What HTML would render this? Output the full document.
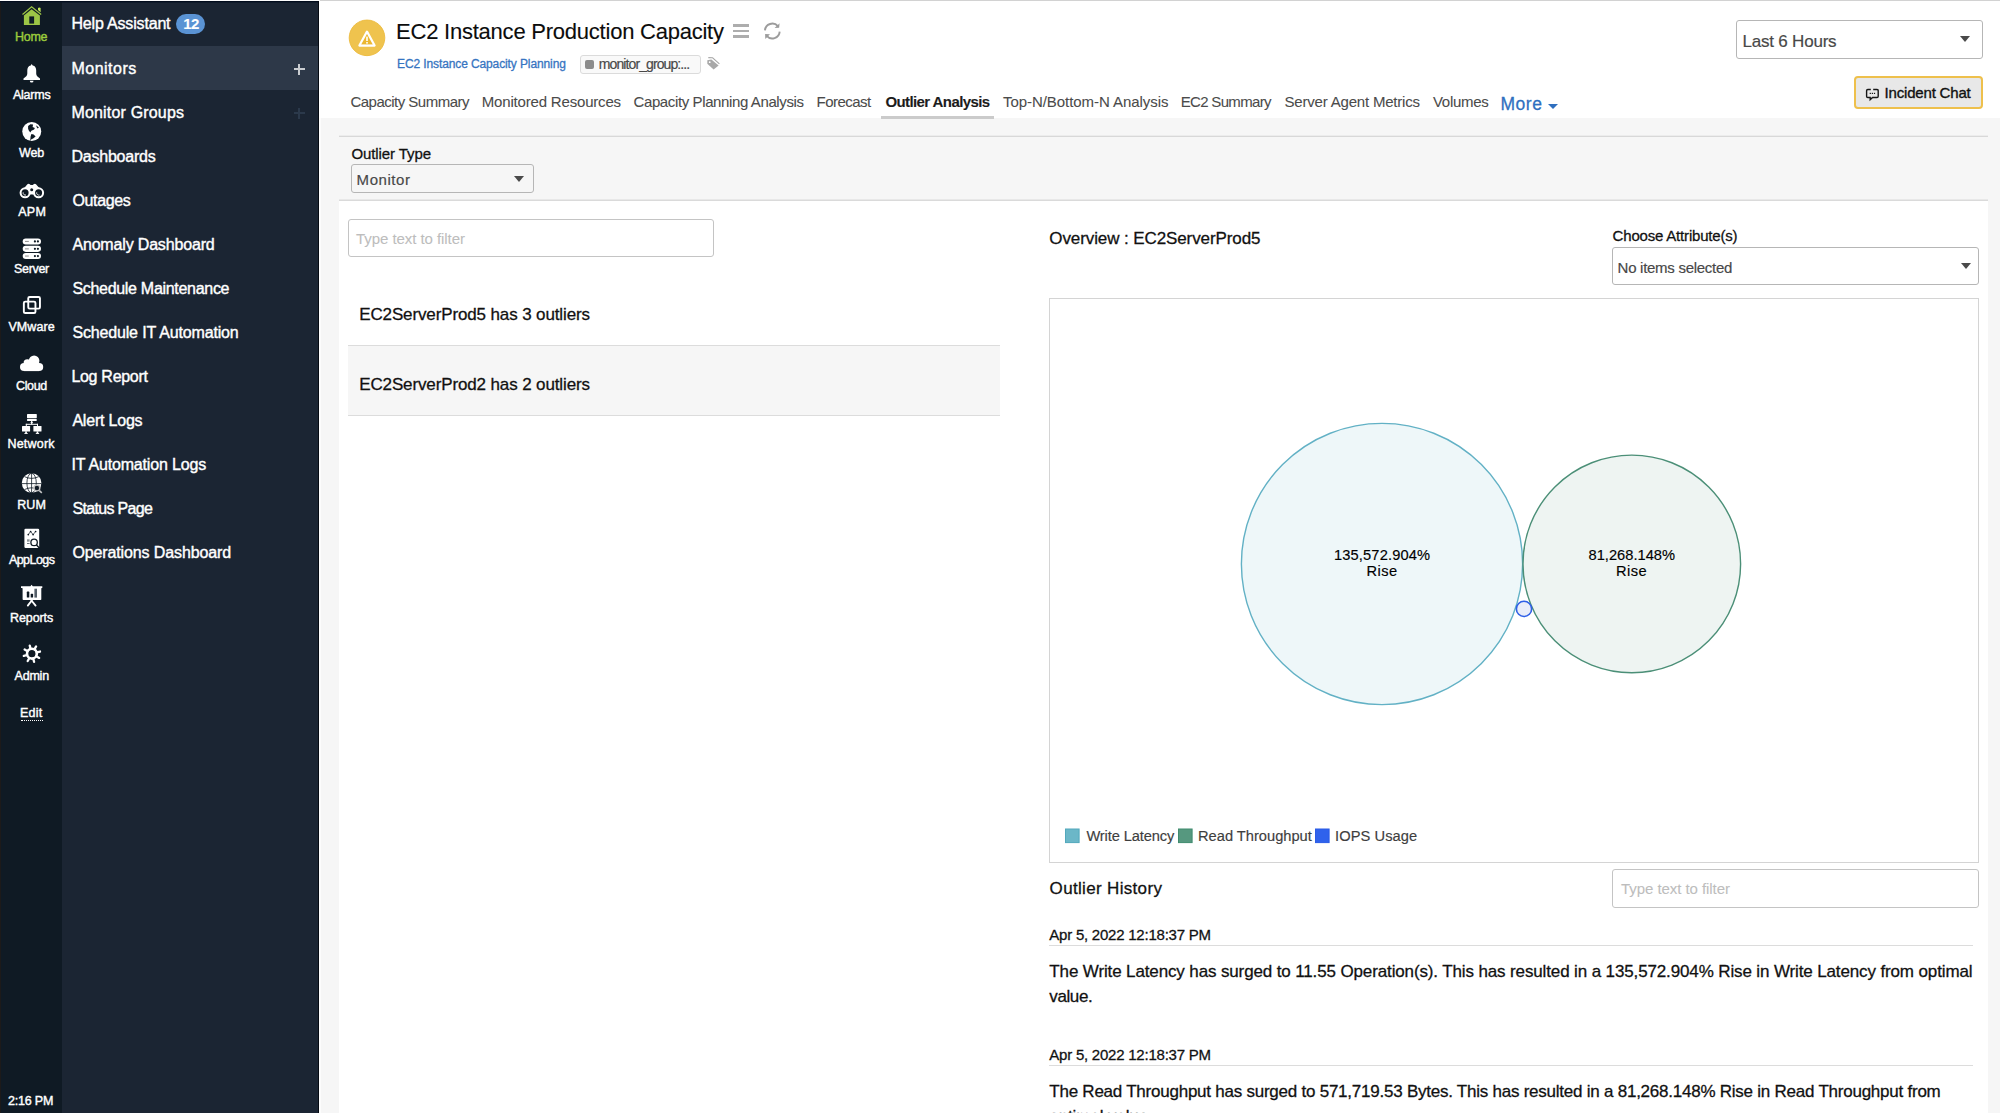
<!DOCTYPE html>
<html>
<head>
<meta charset="utf-8">
<title>EC2 Instance Production Capacity</title>
<style>
*{box-sizing:border-box;margin:0;padding:0}
html,body{width:2000px;height:1113px;overflow:hidden;background:#f6f6f6;font-family:"Liberation Sans",sans-serif;color:#111}
.t{position:absolute;white-space:pre;line-height:1}
.a{position:absolute}
.hr{position:absolute;height:1px;background:#dcdcdc}
.box{position:absolute;border:1px solid #c2c2c2;border-radius:3px;background:#fff}
.caret{position:absolute;width:0;height:0;border-left:5.5px solid transparent;border-right:5.5px solid transparent;border-top:6.5px solid #4a4a4a}
svg{position:absolute;overflow:visible}

</style>
</head>
<body>
<div class="a" style="left:0;top:0;width:62px;height:1113px;background:#0f1a24"></div>
<div class="a" style="left:0;top:0;width:1px;height:1113px;background:#1c1a1a"></div>
<div class="a" style="left:62px;top:0;width:257px;height:1113px;background:#1b2533"></div>
<div class="a" style="left:62px;top:46px;width:257px;height:44px;background:#2d3848"></div>
<div class="a" style="left:319px;top:0;width:1681px;height:118px;background:#fff"></div>
<div class="a" style="left:320px;top:0;width:1680px;height:1px;background:#d2d2d2"></div>
<div class="a" style="left:0;top:0;width:320px;height:1px;background:#fdfdfd"></div>
<div class="a" style="left:0;top:1px;width:319px;height:1px;background:#020c1c"></div>
<div class="a" style="left:0;top:2px;width:319px;height:1px;background:#0a1626;opacity:.6"></div>
<div class="a" style="left:318px;top:1px;width:1px;height:1112px;background:#050a12"></div>
<div class="a" style="left:339px;top:200px;width:1649px;height:913px;background:#fff"></div>
<div class="a" style="left:319px;top:118px;width:2px;height:995px;background:#fcfcfc"></div>
<div class="hr" style="left:339px;top:135px;width:1649px;background:#ececec"></div>
<div class="hr" style="left:339px;top:136px;width:1649px;background:#d8d8d8"></div>
<div class="hr" style="left:339px;top:199px;width:1649px;background:#e8e8e8"></div>
<div class="hr" style="left:339px;top:200px;width:1649px;background:#dadada"></div>
<!-- menu badge + plus -->
<div class="a" style="left:176.4px;top:13.5px;width:28.8px;height:20.3px;border-radius:10.2px;background:#5a93d4"></div>
<div class="a" style="left:293.5px;top:68.3px;width:11px;height:1.5px;background:#c9ccd0"></div>
<div class="a" style="left:298.2px;top:63.5px;width:1.5px;height:11px;background:#c9ccd0"></div>
<div class="a" style="left:293.5px;top:112.3px;width:11px;height:1.5px;background:#2b394b"></div>
<div class="a" style="left:298.2px;top:107.5px;width:1.5px;height:11px;background:#2b394b"></div>
<div class="a" style="left:21px;top:720px;width:22px;height:0;border-top:1px dotted #fff"></div>
<!--ICONS_START-->
<svg style="left:0;top:0" width="62" height="700" viewBox="0 0 62 700">
<path d="M22.5 14.5 L31.6 6.8 L41.2 14.5" fill="none" stroke="#9cc646" stroke-width="1.25" stroke-linejoin="miter"/>
<path d="M31.6 9.3 L39.9 15.6 V25 H23.9 V15.6 Z" fill="#9cc646"/>
<path d="M38 10.1 V7.9 Q39.3 7.2 40.6 7.9 V12.2 Z" fill="#bfe656"/>
<rect x="29.3" y="16.4" width="4.8" height="7.2" fill="#0f1a24"/>
<rect x="30.4" y="17.7" width="2.6" height="5" fill="#0f2028"/>
<path d="M31.7 64.1 L32.7 65.5 C35.2 65.9 36.2 68 36.2 70.5 L36.2 73.5 C36.2 75.6 37.6 77 40 78.4 L40 79.9 L23.5 79.9 L23.5 78.4 C25.9 77 27.3 75.6 27.3 73.5 L27.3 70.5 C27.3 68 28.3 65.9 30.7 65.5 Z" fill="#fff"/>
<path d="M29.8 80.7 H33.5 A1.85 1.85 0 0 1 29.8 80.7 Z" fill="#fff"/>
<circle cx="31.75" cy="131.5" r="9.5" fill="#fff"/>
<path d="M28.1 126.1 L30.4 124.3 L33.1 124.5 L32.6 127.1 L34.9 128.1 L34.1 129.6 L31.4 130.8 L30.3 132.6 L28.8 130.6 L28.1 128.8 Z" fill="#0f1a24"/>
<path d="M36.1 125.3 L38.9 127.6 L37.6 128.6 L36.6 127.1 Z" fill="#0f1a24"/>
<path d="M31.4 134.1 L33.6 134.4 L35.6 136.4 L33.1 138.4 L31.4 139.3 L30.2 140.9 L30.6 136.6 Z" fill="#0f1a24"/>
<path d="M22.6 190 L27.4 184.2 Q28.6 183.5 29.8 184.2 L30.6 185 H32.8 L33.6 184.2 Q34.9 183.5 36 184.2 L41 190 L39 194.6 H24.6 Z" fill="#fff"/>
<circle cx="25.1" cy="192.8" r="5.5" fill="#fff"/><circle cx="38.6" cy="192.8" r="5.5" fill="#fff"/>
<circle cx="25.1" cy="192.8" r="3.5" fill="#0f1a24"/><circle cx="38.6" cy="192.8" r="3.5" fill="#0f1a24"/>
<path d="M23.2 192.4 A2.2 2.2 0 0 0 26 195" fill="none" stroke="#fff" stroke-width="0.9"/><path d="M36.7 192.4 A2.2 2.2 0 0 0 39.5 195" fill="none" stroke="#fff" stroke-width="0.9"/>
<circle cx="31.7" cy="189.7" r="1.5" fill="#0f1a24"/>
<path d="M30.2 198 L31.7 194.4 L33.2 198 Z" fill="#0f1a24"/>
<rect x="22.7" y="238.4" width="18.3" height="6.1" rx="3.05" fill="#fff"/>
<rect x="25" y="240.90" width="3.8" height="1.1" fill="#9a9a9a"/>
<circle cx="34.9" cy="241.45" r="1.1" fill="#0f1a24"/><circle cx="37.9" cy="241.45" r="1.1" fill="#0f1a24"/>
<rect x="22.7" y="245.8" width="18.3" height="6.1" rx="3.05" fill="#fff"/>
<rect x="25" y="248.30" width="3.8" height="1.1" fill="#9a9a9a"/>
<circle cx="34.9" cy="248.85" r="1.1" fill="#0f1a24"/><circle cx="37.9" cy="248.85" r="1.1" fill="#0f1a24"/>
<rect x="22.7" y="253.0" width="18.3" height="6.1" rx="3.05" fill="#fff"/>
<rect x="25" y="255.50" width="3.8" height="1.1" fill="#9a9a9a"/>
<circle cx="34.9" cy="256.05" r="1.1" fill="#0f1a24"/><circle cx="37.9" cy="256.05" r="1.1" fill="#0f1a24"/>
<rect x="28.25" y="296.95" width="11.7" height="11.7" rx="1.4" fill="none" stroke="#fff" stroke-width="1.9"/>
<rect x="23.85" y="301.65" width="11.6" height="11.4" rx="1.4" fill="none" stroke="#fff" stroke-width="1.9"/>
<circle cx="34.1" cy="360.8" r="5.3" fill="#fff"/><circle cx="27.3" cy="363" r="3.7" fill="#fff"/><circle cx="24.1" cy="367" r="4.1" fill="#fff"/><circle cx="39.1" cy="367" r="4.1" fill="#fff"/><rect x="24.1" y="362.5" width="15" height="8.6" fill="#fff"/>
<rect x="27" y="414" width="9.8" height="4.2" rx="0.6" fill="#fff"/><rect x="27" y="418.9" width="9.8" height="2" rx="0.6" fill="#fff"/>
<rect x="31.1" y="420.8" width="1.2" height="3.6" fill="#fff"/><path d="M30.2 422.4 L31.7 421.6 L33.2 422.4 L31.7 423.2 Z" fill="#fff"/>
<rect x="25.8" y="423.8" width="12.2" height="1" fill="#fff"/><rect x="25.8" y="423.8" width="1" height="2.4" fill="#fff"/><rect x="37" y="423.8" width="1" height="2.4" fill="#fff"/>
<rect x="22" y="426.1" width="8.1" height="5.4" rx="0.5" fill="#fff"/><rect x="25.2" y="431.4" width="1.7" height="2" fill="#fff"/><rect x="24.4" y="433.1" width="3.3" height="0.9" fill="#fff"/>
<rect x="33.4" y="426.1" width="8.1" height="5.4" rx="0.5" fill="#fff"/><rect x="36.6" y="431.4" width="1.7" height="2" fill="#fff"/><rect x="35.8" y="433.1" width="3.3" height="0.9" fill="#fff"/>
<circle cx="31.6" cy="483.05" r="9.8" fill="#fff"/>
<g fill="none" stroke="#0f1a24" stroke-width="0.8"><path d="M31.6 473 V493"/><path d="M21.8 483.6 H41.4"/><ellipse cx="31.6" cy="483.05" rx="4.7" ry="9.8"/><path d="M24.4 476.6 Q31.6 480.2 38.8 476.6"/><path d="M24.4 489.6 Q31.6 486 38.8 489.6"/></g>
<circle cx="36.9" cy="488" r="2.9" fill="#0f1a24" stroke="#c4c4c4" stroke-width="1.4"/><path d="M39.4 490.6 L41.8 492.9" stroke="#c8c8c8" stroke-width="1.5"/>
<rect x="24.4" y="528.7" width="14.8" height="19.2" rx="1.2" fill="#fff"/>
<path d="M28.3 534.6 L30.6 531.5 L33.1 534.6 L35.6 531.5" fill="none" stroke="#0f1a24" stroke-width="0.7"/>
<circle cx="28.3" cy="534.6" r="0.85" fill="#0f1a24"/>
<circle cx="30.6" cy="531.5" r="0.85" fill="#0f1a24"/>
<circle cx="33.1" cy="534.6" r="0.85" fill="#0f1a24"/>
<circle cx="35.6" cy="531.5" r="0.85" fill="#0f1a24"/>
<rect x="27" y="539.3" width="2.6" height="2.4" fill="#8d9499"/><rect x="27" y="543" width="2.6" height="0.9" fill="#5a646c"/>
<circle cx="34.1" cy="542.4" r="3.2" fill="#fff" stroke="#0f1a24" stroke-width="1.3"/><path d="M36.5 544.9 L39.4 547.9" stroke="#0f1a24" stroke-width="1.4"/>
<path d="M21 586.3 H30.4 L31.6 584.8 L32.8 586.3 H42.3 V588 H21 Z" fill="#fff"/><rect x="22.6" y="587.5" width="18.7" height="12.5" rx="0.8" fill="#fff"/>
<rect x="26.8" y="591.6" width="2.5" height="6" rx="0.6" fill="#0f1a24"/><rect x="30.7" y="593.8" width="2.4" height="3.8" rx="0.6" fill="#0f1a24"/><rect x="34.4" y="588.7" width="2.6" height="8.9" fill="#56606a"/>
<path d="M27.8 605.6 L31.6 600.6 L35.6 605.6" fill="none" stroke="#fff" stroke-width="1.8" stroke-linecap="round"/><rect x="30.6" y="599.5" width="2" height="2" fill="#fff"/>
<path d="M30.61 648.87 L29.73 645.59" stroke="#fff" stroke-width="2.3" stroke-linecap="round"/>
<path d="M34.40 649.37 L36.10 646.43" stroke="#fff" stroke-width="2.3" stroke-linecap="round"/>
<path d="M36.73 652.41 L40.01 651.53" stroke="#fff" stroke-width="2.3" stroke-linecap="round"/>
<path d="M36.23 656.20 L39.17 657.90" stroke="#fff" stroke-width="2.3" stroke-linecap="round"/>
<path d="M33.19 658.53 L34.07 661.81" stroke="#fff" stroke-width="2.3" stroke-linecap="round"/>
<path d="M29.40 658.03 L27.70 660.97" stroke="#fff" stroke-width="2.3" stroke-linecap="round"/>
<path d="M27.07 654.99 L23.79 655.87" stroke="#fff" stroke-width="2.3" stroke-linecap="round"/>
<path d="M27.57 651.20 L24.63 649.50" stroke="#fff" stroke-width="2.3" stroke-linecap="round"/>
<circle cx="31.9" cy="653.7" r="4.9" fill="none" stroke="#fff" stroke-width="2.6"/>
</svg>
<!--ICONS_END-->
<!-- header -->
<svg style="left:346px;top:17px" width="42" height="42" viewBox="346 17 42 42"><circle cx="367" cy="37.85" r="17.8" fill="#efc34e" stroke="#ecba3c" stroke-width="0.9"/><path d="M367 34.6 L372.4 44.1 H361.6 Z" fill="#ecb730"/></svg>
<svg style="left:357px;top:29px" width="20" height="19" viewBox="0 0 20 19"><path d="M10 2.6 L17.6 16.6 H2.4 Z" fill="none" stroke="#fff" stroke-width="2.2" stroke-linejoin="round"/><rect x="9.2" y="7.6" width="1.6" height="4.4" fill="#fff"/><rect x="9.2" y="13" width="1.6" height="1.6" fill="#fff"/></svg>
<div class="a" style="left:733px;top:24px;width:16px;height:3px;background:#adadad"></div>
<div class="a" style="left:733px;top:29.6px;width:16px;height:2.8px;background:#adadad"></div>
<div class="a" style="left:733px;top:35px;width:16px;height:3px;background:#adadad"></div>
<svg style="left:760px;top:20px" width="24" height="22" viewBox="760 20 24 22"><path d="M764.93 30.4 A7.4 7.4 0 0 1 777.9 26.2" fill="none" stroke="#9c9c9c" stroke-width="1.9"/><path d="M779.68 31.6 A7.4 7.4 0 0 1 766.7 35.9" fill="none" stroke="#9c9c9c" stroke-width="1.9"/><path d="M779.6 23.2 L779.1 27.8 L774.6 28 Z" fill="#9c9c9c"/><path d="M765.1 34.1 L770 34.3 L765.3 39.1 Z" fill="#9c9c9c"/></svg>
<div class="box" style="left:580px;top:54.5px;width:121px;height:19px;background:#f9f9f9;border-color:#dbdbdb"></div>
<div class="a" style="left:585px;top:59.6px;width:9px;height:9px;border-radius:2px;background:#8c8c8c"></div>
<svg style="left:705px;top:55px" width="16" height="16" viewBox="705 55 16 16"><path d="M707.3 60.2 L711.4 59.5 L718.6 65.6 L713.6 69.6 L707.3 63.8 Z" fill="#a8a8a8"/><path d="M708.3 57.6 L712.6 57.8 L719.4 63.9" fill="none" stroke="#a8a8a8" stroke-width="1.1"/><circle cx="709.7" cy="62.2" r="0.9" fill="#fff"/></svg>
<div class="a" style="left:881.2px;top:115.5px;width:112.6px;height:3px;background:#cbcbcb"></div>
<div class="a" style="left:1547.6px;top:103.6px;width:0;height:0;border-left:5.5px solid transparent;border-right:5.5px solid transparent;border-top:5.5px solid #2f6fbf"></div>
<div class="box" style="left:1736px;top:19.5px;width:247px;height:39px;border-color:#b6b6b6"></div>
<div class="caret" style="left:1959.5px;top:36.3px"></div>
<div class="a" style="left:1854px;top:76px;width:129px;height:33px;border:2px solid #eec04c;border-radius:4px;background:#e8e8e8"></div>
<svg style="left:1865px;top:88px" width="15" height="13" viewBox="0 0 15 13"><path d="M5.8 1.5 H2.8 Q1.6 1.5 1.6 2.7 V8.3 Q1.6 9.5 2.8 9.5 H5.2 V11.6 L7.6 9.5 H12 Q13.2 9.5 13.2 8.3 V2.7 Q13.2 1.5 12 1.5 H8.2" fill="none" stroke="#161616" stroke-width="1.4"/><rect x="4.7" y="4.8" width="1.2" height="1.2" fill="#161616"/><rect x="6.8" y="4.8" width="1.2" height="1.2" fill="#161616"/><rect x="8.9" y="4.8" width="1.2" height="1.2" fill="#161616"/></svg>
<!-- filter strip -->
<div class="box" style="left:351.4px;top:164.4px;width:182.6px;height:28.4px;background:#f6f6f6;border-color:#b6b6b6"></div>
<div class="caret" style="left:514.4px;top:176px"></div>
<div class="box" style="left:347.6px;top:219px;width:366.6px;height:38.4px;border-color:#c4c4c4"></div>
<!-- list -->
<div class="a" style="left:347.5px;top:346px;width:652.5px;height:69px;background:#f6f6f6"></div>
<div class="hr" style="left:347.5px;top:345px;width:652.5px"></div>
<div class="hr" style="left:347.5px;top:414.5px;width:652.5px"></div>
<!-- right -->
<div class="box" style="left:1612.4px;top:246.6px;width:366.6px;height:38.4px;border-color:#b6b6b6"></div>
<div class="caret" style="left:1960.5px;top:263px"></div>
<div class="a" style="left:1049px;top:298px;width:930px;height:564.5px;border:1px solid #d4d4d4;background:#fff"></div>
<svg style="left:1049px;top:298px" width="930" height="564" viewBox="1049 298 930 564">
<circle cx="1382" cy="564" r="140.6" fill="#eef7f9" stroke="#62b1c5" stroke-width="1.4"/>
<circle cx="1631.8" cy="563.9" r="108.8" fill="#eef4f2" stroke="#4b8f77" stroke-width="1.4"/>
<circle cx="1524" cy="608.9" r="7.6" fill="#e9edf9" stroke="#2f5fe6" stroke-width="1.6"/>
<rect x="1065.5" y="829" width="13.6" height="13.6" fill="#6bb7c8" stroke="#52a8bc" stroke-width="1"/>
<rect x="1178.5" y="829" width="13.6" height="13.6" fill="#56987f" stroke="#3f8b6e" stroke-width="1"/>
<rect x="1315.5" y="829" width="13.6" height="13.6" fill="#2f62ec" stroke="#2a5be6" stroke-width="1"/>
</svg>
<div class="box" style="left:1612.4px;top:869.4px;width:366.6px;height:38.4px;border-color:#c4c4c4"></div>
<div class="hr" style="left:1049px;top:945px;width:924px"></div>
<div class="hr" style="left:1049px;top:1065px;width:924px"></div>

<span class="t" style="left:15.00px;top:31.0px;font-size:12.5px;color:#9ccc3c;letter-spacing:-0.264px;-webkit-text-stroke:0.4px #9ccc3c">Home</span>
<span class="t" style="left:13.00px;top:88.5px;font-size:12.5px;color:#fff;letter-spacing:-0.248px;-webkit-text-stroke:0.4px #fff">Alarms</span>
<span class="t" style="left:19.00px;top:147.0px;font-size:12.5px;color:#fff;letter-spacing:-0.112px;-webkit-text-stroke:0.4px #fff">Web</span>
<span class="t" style="left:18.30px;top:205.5px;font-size:12.5px;color:#fff;letter-spacing:0.213px;-webkit-text-stroke:0.4px #fff">APM</span>
<span class="t" style="left:14.00px;top:263.0px;font-size:12.5px;color:#fff;letter-spacing:-0.331px;-webkit-text-stroke:0.4px #fff">Server</span>
<span class="t" style="left:8.40px;top:321.0px;font-size:12.5px;color:#fff;letter-spacing:0.082px;-webkit-text-stroke:0.4px #fff">VMware</span>
<span class="t" style="left:16.00px;top:379.5px;font-size:12.5px;color:#fff;letter-spacing:-0.352px;-webkit-text-stroke:0.4px #fff">Cloud</span>
<span class="t" style="left:7.40px;top:437.5px;font-size:12.5px;color:#fff;letter-spacing:0.218px;-webkit-text-stroke:0.4px #fff">Network</span>
<span class="t" style="left:17.30px;top:499.0px;font-size:12.5px;color:#fff;letter-spacing:0.023px;-webkit-text-stroke:0.4px #fff">RUM</span>
<span class="t" style="left:8.90px;top:553.5px;font-size:12.5px;color:#fff;letter-spacing:-0.549px;-webkit-text-stroke:0.4px #fff">AppLogs</span>
<span class="t" style="left:10.00px;top:612.0px;font-size:12.5px;color:#fff;letter-spacing:-0.086px;-webkit-text-stroke:0.4px #fff">Reports</span>
<span class="t" style="left:14.50px;top:670.0px;font-size:12.5px;color:#fff;letter-spacing:-0.195px;-webkit-text-stroke:0.4px #fff">Admin</span>
<span class="t" style="left:20.00px;top:707.0px;font-size:12.5px;color:#fff;letter-spacing:0.245px;-webkit-text-stroke:0.4px #fff">Edit</span>
<span class="t" style="left:8.00px;top:1095.0px;font-size:12.5px;color:#fff;letter-spacing:-0.190px;-webkit-text-stroke:0.4px #fff">2:16 PM</span>
<span class="t" style="left:71.40px;top:16.0px;font-size:16px;color:#fff;letter-spacing:-0.171px;-webkit-text-stroke:0.4px #fff">Help Assistant</span>
<span class="t" style="left:71.40px;top:61.0px;font-size:16px;color:#fff;letter-spacing:0.507px;-webkit-text-stroke:0.4px #fff">Monitors</span>
<span class="t" style="left:71.40px;top:105.0px;font-size:16px;color:#fff;letter-spacing:0.180px;-webkit-text-stroke:0.4px #fff">Monitor Groups</span>
<span class="t" style="left:71.40px;top:149.0px;font-size:16px;color:#fff;letter-spacing:-0.208px;-webkit-text-stroke:0.4px #fff">Dashboards</span>
<span class="t" style="left:72.40px;top:193.0px;font-size:16px;color:#fff;letter-spacing:-0.347px;-webkit-text-stroke:0.4px #fff">Outages</span>
<span class="t" style="left:72.40px;top:237.0px;font-size:16px;color:#fff;letter-spacing:-0.167px;-webkit-text-stroke:0.4px #fff">Anomaly Dashboard</span>
<span class="t" style="left:72.40px;top:281.0px;font-size:16px;color:#fff;letter-spacing:-0.299px;-webkit-text-stroke:0.4px #fff">Schedule Maintenance</span>
<span class="t" style="left:72.40px;top:325.0px;font-size:16px;color:#fff;letter-spacing:-0.156px;-webkit-text-stroke:0.4px #fff">Schedule IT Automation</span>
<span class="t" style="left:71.40px;top:369.0px;font-size:16px;color:#fff;letter-spacing:-0.291px;-webkit-text-stroke:0.4px #fff">Log Report</span>
<span class="t" style="left:72.40px;top:413.0px;font-size:16px;color:#fff;letter-spacing:-0.204px;-webkit-text-stroke:0.4px #fff">Alert Logs</span>
<span class="t" style="left:71.40px;top:457.0px;font-size:16px;color:#fff;letter-spacing:-0.161px;-webkit-text-stroke:0.4px #fff">IT Automation Logs</span>
<span class="t" style="left:72.40px;top:501.0px;font-size:16px;color:#fff;letter-spacing:-0.657px;-webkit-text-stroke:0.4px #fff">Status Page</span>
<span class="t" style="left:72.40px;top:545.0px;font-size:16px;color:#fff;letter-spacing:-0.115px;-webkit-text-stroke:0.4px #fff">Operations Dashboard</span>
<span class="t" style="left:183.30px;top:16.0px;font-size:15px;color:#fff;letter-spacing:-0.742px;font-weight:700;-webkit-text-stroke:0.1px #fff">12</span>
<span class="t" style="left:396.10px;top:21.0px;font-size:22px;color:#0c0c0c;letter-spacing:-0.231px;-webkit-text-stroke:0.12px #0c0c0c">EC2 Instance Production Capacity</span>
<span class="t" style="left:397.00px;top:57.6px;font-size:12px;color:#3674c1;letter-spacing:-0.111px;-webkit-text-stroke:0.28px #3674c1">EC2 Instance Capacity Planning</span>
<span class="t" style="left:598.80px;top:56.7px;font-size:14px;color:#484848;letter-spacing:-0.903px;-webkit-text-stroke:0.18px #484848">monitor_group:...</span>
<span class="t" style="left:350.40px;top:94.4px;font-size:15px;color:#4b4b4b;letter-spacing:-0.507px;-webkit-text-stroke:0.08px #4b4b4b">Capacity Summary</span>
<span class="t" style="left:481.80px;top:94.4px;font-size:15px;color:#4b4b4b;letter-spacing:-0.181px;-webkit-text-stroke:0.08px #4b4b4b">Monitored Resources</span>
<span class="t" style="left:633.50px;top:94.4px;font-size:15px;color:#4b4b4b;letter-spacing:-0.385px;-webkit-text-stroke:0.08px #4b4b4b">Capacity Planning Analysis</span>
<span class="t" style="left:816.50px;top:94.4px;font-size:15px;color:#4b4b4b;letter-spacing:-0.526px;-webkit-text-stroke:0.08px #4b4b4b">Forecast</span>
<span class="t" style="left:885.40px;top:94.4px;font-size:15px;color:#1c1c1c;letter-spacing:-0.591px;font-weight:700;-webkit-text-stroke:0.1px #1c1c1c">Outlier Analysis</span>
<span class="t" style="left:1003.00px;top:94.4px;font-size:15px;color:#4b4b4b;letter-spacing:-0.057px;-webkit-text-stroke:0.08px #4b4b4b">Top-N/Bottom-N Analysis</span>
<span class="t" style="left:1180.70px;top:94.4px;font-size:15px;color:#4b4b4b;letter-spacing:-0.672px;-webkit-text-stroke:0.08px #4b4b4b">EC2 Summary</span>
<span class="t" style="left:1284.50px;top:94.4px;font-size:15px;color:#4b4b4b;letter-spacing:-0.192px;-webkit-text-stroke:0.08px #4b4b4b">Server Agent Metrics</span>
<span class="t" style="left:1433.00px;top:94.4px;font-size:15px;color:#4b4b4b;letter-spacing:-0.305px;-webkit-text-stroke:0.08px #4b4b4b">Volumes</span>
<span class="t" style="left:1500.40px;top:96.0px;font-size:17.5px;color:#2f6fbf;letter-spacing:0.554px;-webkit-text-stroke:0.28px #2f6fbf">More</span>
<span class="t" style="left:1742.60px;top:33.3px;font-size:17px;color:#484848;letter-spacing:-0.216px;-webkit-text-stroke:0.18px #484848">Last 6 Hours</span>
<span class="t" style="left:1884.50px;top:85.4px;font-size:15px;color:#111;letter-spacing:-0.177px;-webkit-text-stroke:0.35px #111">Incident Chat</span>
<span class="t" style="left:351.40px;top:146.4px;font-size:15px;color:#111;letter-spacing:-0.084px;-webkit-text-stroke:0.28px #111">Outlier Type</span>
<span class="t" style="left:356.60px;top:172.0px;font-size:15px;color:#484848;letter-spacing:0.563px;-webkit-text-stroke:0.18px #484848">Monitor</span>
<span class="t" style="left:356.00px;top:231.4px;font-size:15px;color:#bdbdbd;letter-spacing:-0.058px;-webkit-text-stroke:0.08px #bdbdbd">Type text to filter</span>
<span class="t" style="left:359.20px;top:306.3px;font-size:17px;color:#111;letter-spacing:-0.126px;-webkit-text-stroke:0.28px #111">EC2ServerProd5 has 3 outliers</span>
<span class="t" style="left:359.20px;top:376.3px;font-size:17px;color:#111;letter-spacing:-0.126px;-webkit-text-stroke:0.28px #111">EC2ServerProd2 has 2 outliers</span>
<span class="t" style="left:1049.30px;top:229.8px;font-size:17px;color:#111;letter-spacing:-0.099px;-webkit-text-stroke:0.28px #111">Overview : EC2ServerProd5</span>
<span class="t" style="left:1612.60px;top:228.0px;font-size:15px;color:#111;letter-spacing:-0.190px;-webkit-text-stroke:0.28px #111">Choose Attribute(s)</span>
<span class="t" style="left:1617.60px;top:260.0px;font-size:15px;color:#484848;letter-spacing:-0.280px;-webkit-text-stroke:0.18px #484848">No items selected</span>
<span class="t" style="left:1334.00px;top:548.0px;font-size:14.667px;color:#000;letter-spacing:0.136px;-webkit-text-stroke:0.15px #000">135,572.904%</span>
<span class="t" style="left:1366.50px;top:564.0px;font-size:14.667px;color:#000;letter-spacing:0.444px;-webkit-text-stroke:0.15px #000">Rise</span>
<span class="t" style="left:1588.50px;top:548.0px;font-size:14.667px;color:#000;letter-spacing:0.015px;-webkit-text-stroke:0.15px #000">81,268.148%</span>
<span class="t" style="left:1616.00px;top:564.0px;font-size:14.667px;color:#000;letter-spacing:0.444px;-webkit-text-stroke:0.15px #000">Rise</span>
<span class="t" style="left:1086.40px;top:829.0px;font-size:14.667px;color:#3e3e3e;letter-spacing:-0.117px;-webkit-text-stroke:0.15px #3e3e3e">Write Latency</span>
<span class="t" style="left:1198.00px;top:829.0px;font-size:14.667px;color:#3e3e3e;letter-spacing:-0.000px;-webkit-text-stroke:0.15px #3e3e3e">Read Throughput</span>
<span class="t" style="left:1335.00px;top:829.0px;font-size:14.667px;color:#3e3e3e;letter-spacing:0.077px;-webkit-text-stroke:0.15px #3e3e3e">IOPS Usage</span>
<span class="t" style="left:1049.60px;top:880.0px;font-size:17px;color:#111;letter-spacing:0.330px;-webkit-text-stroke:0.28px #111">Outlier History</span>
<span class="t" style="left:1621.00px;top:881.0px;font-size:15px;color:#bdbdbd;letter-spacing:-0.058px;-webkit-text-stroke:0.08px #bdbdbd">Type text to filter</span>
<span class="t" style="left:1049.30px;top:927.0px;font-size:15px;color:#111;letter-spacing:-0.231px;-webkit-text-stroke:0.28px #111">Apr 5, 2022 12:18:37 PM</span>
<span class="t" style="left:1049.30px;top:963.0px;font-size:17px;color:#111;letter-spacing:-0.130px;-webkit-text-stroke:0.28px #111">The Write Latency has surged to 11.55 Operation(s). This has resulted in a 135,572.904% Rise in Write Latency from optimal</span>
<span class="t" style="left:1049.30px;top:987.6px;font-size:17px;color:#111;letter-spacing:-0.388px;-webkit-text-stroke:0.28px #111">value.</span>
<span class="t" style="left:1049.30px;top:1046.5px;font-size:15px;color:#111;letter-spacing:-0.231px;-webkit-text-stroke:0.28px #111">Apr 5, 2022 12:18:37 PM</span>
<span class="t" style="left:1049.30px;top:1082.8px;font-size:17px;color:#111;letter-spacing:-0.238px;-webkit-text-stroke:0.28px #111">The Read Throughput has surged to 571,719.53 Bytes. This has resulted in a 81,268.148% Rise in Read Throughput from</span>
<span class="t" style="left:1049.30px;top:1108.0px;font-size:17px;color:#111;letter-spacing:-0.113px;-webkit-text-stroke:0.28px #111">optimal value.</span>
</body>
</html>
